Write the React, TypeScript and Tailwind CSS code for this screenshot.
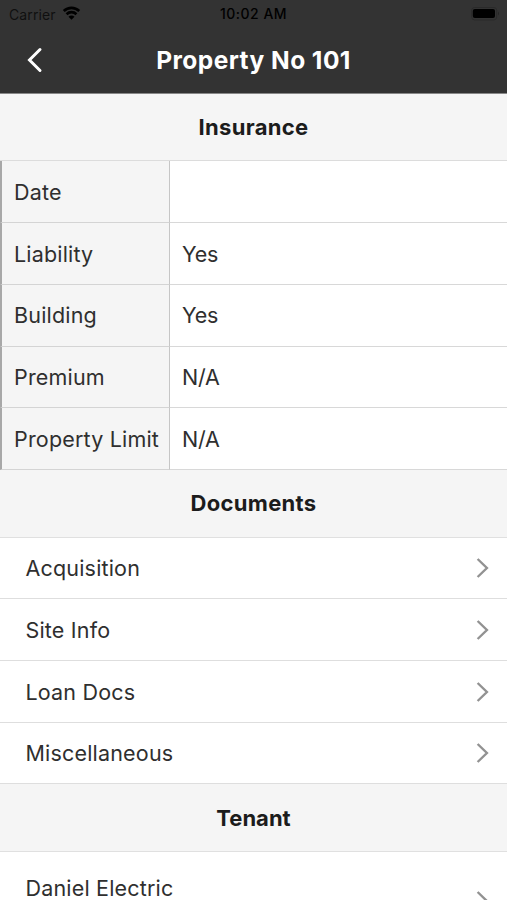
import { clsx } from 'clsx'

const insurance = [
  { label: 'Date', value: '', height: 'h-[62px]', pad: 'pt-[2px]' },
  { label: 'Liability', value: 'Yes', height: 'h-[62px]', pad: 'pt-[2px]' },
  { label: 'Building', value: 'Yes', height: 'h-[62px]', pad: 'pt-0' },
  { label: 'Premium', value: 'N/A', height: 'h-[61px]', pad: 'pt-0' },
  { label: 'Property Limit', value: 'N/A', height: 'h-[62px]', pad: 'pt-[2px]' },
]

const documents = [
  { label: 'Acquisition', height: 'h-[61px]' },
  { label: 'Site Info', height: 'h-[62px]' },
  { label: 'Loan Docs', height: 'h-[62px]' },
  { label: 'Miscellaneous', height: 'h-[61px]' },
]

function StatusBar() {
  return (
    <div className="grid h-7 grid-cols-3 items-center pl-[9px] pr-[7px] text-black">
      <div className="flex items-center gap-[6px] text-[14px] tracking-[0.1px] text-black/70">
        <span>Carrier</span>
        <svg className="-mt-[2px]" width="19" height="14" viewBox="0 0 19 15" fill="none" stroke="#000" strokeWidth="2.8">
          <path d="M1.2 5.4a11.8 11.8 0 0 1 16.6 0" />
          <path d="M4.2 8.8a7.5 7.5 0 0 1 10.6 0" />
          <path d="M9.5 14.6 6.3 11.4a4.5 4.5 0 0 1 6.4 0z" fill="#000" stroke="none" />
        </svg>
      </div>
      <div className="pb-px pr-[2px] text-center text-[14px] font-medium tracking-[0.5px] whitespace-nowrap">10:02 AM</div>
      <svg className="justify-self-end" width="29" height="15" viewBox="0 0 29 15">
        <rect x="0.7" y="0.4" width="25" height="12.6" rx="3" fill="none" stroke="#2a2a2a" />
        <rect x="1.8" y="1.9" width="22.2" height="9.2" rx="2" fill="#000" />
        <path d="M27 4.6q2 2 0 4z" fill="#262626" />
      </svg>
    </div>
  )
}

function SectionTitle({ title, className }: { title: string; className?: string }) {
  return (
    <h2
      className={clsx(
        'flex shrink-0 items-center justify-center border-b bg-[#f5f5f5] text-[22px] font-[650] text-[#1c1c1c]',
        className,
      )}
    >
      {title}
    </h2>
  )
}

function Chevron() {
  return (
    <svg width="14" height="22" viewBox="0 0 14 22" fill="none" stroke="#929292" strokeWidth="2.4">
      <path d="M1.6 2 10.9 11 1.6 20" />
    </svg>
  )
}

export default function App() {
  return (
    <div className="flex h-[900px] w-[507px] flex-col overflow-hidden bg-white font-['Inter',sans-serif] text-[21.5px] tracking-[0.18px] text-[#2f2f2f]">
      <header className="h-[94px] shrink-0 border-b border-[#888] bg-[#333]">
        <StatusBar />
        <div className="grid h-16 grid-cols-[60px_1fr_60px] items-center">
          <button className="pl-[26px]" aria-label="Back">
            <svg width="18" height="26" viewBox="0 0 18 26" fill="none" stroke="#fff" strokeWidth="3" strokeLinecap="round">
              <path d="M14 2.5 3.5 13 14 23.5" />
            </svg>
          </button>
          <h1 className="pb-px text-center text-[24.5px] leading-8 font-[650] tracking-[0.45px] text-white">
            Property No 101
          </h1>
        </div>
      </header>

      <SectionTitle title="Insurance" className="h-[67px] border-[#dcdcdc] tracking-[0.3px]" />
      <div className="shrink-0">
        {insurance.map((row) => (
          <div key={row.label} className={clsx('flex', row.height)}>
            <div
              className={clsx(
                'flex w-[170px] items-center whitespace-nowrap border-b border-l-2 border-r border-b-[#d4d4d4] border-l-[#a8a8a8] border-r-[#c6c6c6] bg-[#f5f5f5] pl-3',
                row.pad,
              )}
            >
              {row.label}
            </div>
            <div className={clsx('flex flex-1 items-center border-b border-[#d8d8d8] pl-3 tracking-[-0.25px]', row.pad)}>
              {row.value}
            </div>
          </div>
        ))}
      </div>

      <SectionTitle title="Documents" className="h-[68px] border-[#e0e0e0] tracking-[0.3px]" />
      <div className="shrink-0">
        {documents.map((doc) => (
          <div
            key={doc.label}
            className={clsx('flex items-center justify-between border-b border-[#dedede] pl-[25.5px] pr-[17px]', doc.height)}
          >
            <span className="pt-px">{doc.label}</span>
            <Chevron />
          </div>
        ))}
      </div>

      <SectionTitle title="Tenant" className="h-[68px] border-[#e0e0e0] pt-px tracking-[0px]" />
      <div className="flex h-12 shrink-0 justify-between pl-[25.5px] pr-[17px]">
        <span className="pt-[25px] leading-[23px]">Daniel Electric</span>
        <div className="pt-[38px]">
          <Chevron />
        </div>
      </div>
    </div>
  )
}
